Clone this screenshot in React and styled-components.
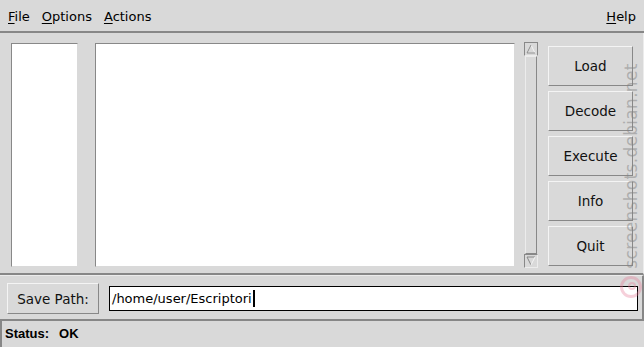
import React from 'react'
import styled, { createGlobalStyle } from 'styled-components'

const Global = createGlobalStyle`
  html, body { margin: 0; padding: 0; background: #d9d9d9; }
  body { width: 644px; height: 347px; overflow: hidden; }
`

const Window = styled.div`
  position: relative;
  width: 644px;
  height: 347px;
  background: #d9d9d9;
  display: flex;
  flex-direction: column;
  font-family: 'DejaVu Sans', sans-serif;
  font-size: 13px;
  color: #000;
  overflow: hidden;
`

const MenuBar = styled.div`
  height: 31px;
  display: flex;
  align-items: center;
  padding: 0 8px 0 8px;
  border-bottom: 2px solid #878787;
  gap: 12px;
`

const MenuItem = styled.span`
  margin-left: ${(p) => (p.$right ? 'auto' : '0')};
  line-height: 16px;
  padding-top: 3px;
  font-size: 13px;
  u { text-decoration: underline; text-underline-offset: 2px; }
`

const Main = styled.div`
  height: 242px;
  display: flex;
  padding: 10px 0 0 11px;
  box-sizing: border-box;
  border-right: 1px solid #ececec;
  border-bottom: 2px solid #878787;
`

const ListBox = styled.div`
  width: 67px;
  height: 224px;
  background: #fff;
  border-top: 1px solid #888;
  border-left: 1px solid #888;
  border-right: 1px solid #d9d9d9;
  border-bottom: 1px solid #d9d9d9;
  box-sizing: border-box;
`

const TextArea = styled(ListBox)`
  width: 420px;
  margin-left: 17px;
`

const ScrollBar = styled.div`
  width: 14px;
  height: 226px;
  margin: -1px 0 0 9px;
  display: flex;
  flex-direction: column;
  box-sizing: border-box;
`

const Arrow = styled.div`
  height: 14px;
  border: 1px solid;
  border-color: ${(p) => (p.$down ? '#888 #ececec #ececec #888' : '#888 #888 #ececec #888')};
  box-sizing: border-box;
  display: flex;
  align-items: center;
  justify-content: center;
  svg { display: block; }
`

const Trough = styled.div`
  flex: 1;
  margin: 0 1px;
  border: 1px solid;
  border-color: #ececec #888 #888 #ececec;
`

const ButtonColumn = styled.div`
  display: flex;
  flex-direction: column;
  gap: 5px;
  margin: 3px 0 0 10px;
`

const TkButton = styled.div`
  width: ${(p) => p.$w || 85}px;
  height: ${(p) => p.$h || 40}px;
  box-sizing: border-box;
  border: 1px solid;
  border-color: #f4f4f4 #888 #888 #f4f4f4;
  display: flex;
  align-items: center;
  justify-content: center;
  font-family: 'DejaVu Sans', sans-serif;
  font-size: 13.5px;
  color: #111;
`

const BottomFrame = styled.div`
  height: 46px;
  display: flex;
  align-items: center;
  padding: 2px 0 0 7px;
  border-top: 1px solid #ececec;
  border-right: 2px solid #878787;
  border-bottom: 2px solid #878787;
  box-sizing: border-box;
`

const PathEntry = styled.div`
  margin-left: 10px;
  width: 529px;
  height: 25px;
  box-sizing: border-box;
  background: #fff;
  border: 1px solid #000;
  display: flex;
  align-items: center;
  padding-left: 2px;
  font-size: 13px;
`

const Cursor = styled.span`
  display: inline-block;
  width: 2px;
  height: 17px;
  background: #000;
  margin-left: 1px;
`

const StatusBar = styled.div`
  flex: 1;
  display: flex;
  align-items: flex-start;
  padding: 5px 0 0 3px;
  border-left: 2px solid #878787;
  font-family: 'Liberation Sans', Arial, sans-serif;
  font-weight: bold;
  font-size: 13px;
  gap: 10px;
`

const Watermark = styled.div`
  position: absolute;
  left: 631px;
  top: 166px;
  transform: translate(-50%, -50%) rotate(-90deg);
  white-space: nowrap;
  font-family: 'DejaVu Sans', sans-serif;
  font-size: 17px;
  color: rgba(130, 130, 130, 0.5);
  letter-spacing: 0.3px;
`

const Logo = styled.svg`
  position: absolute;
  left: 619px;
  top: 275px;
`

const Under = ({ children }) => (
  <>
    <u>{children[0]}</u>
    {children.slice(1)}
  </>
)

const App = () => (
  <Window>
    <Global />
    <MenuBar>
      <MenuItem><Under>File</Under></MenuItem>
      <MenuItem><Under>Options</Under></MenuItem>
      <MenuItem><Under>Actions</Under></MenuItem>
      <MenuItem $right><Under>Help</Under></MenuItem>
    </MenuBar>
    <Main>
      <ListBox />
      <TextArea />
      <ScrollBar>
        <Arrow>
          <svg width="10" height="10" viewBox="0 0 10 10">
            <path d="M5 1 L9 9 L1 9 Z" fill="#d9d9d9" stroke="#f4f4f4" strokeWidth="1" />
            <path d="M5 1 L1 9 M1 9 L9 9" stroke="#888" strokeWidth="1" fill="none" />
          </svg>
        </Arrow>
        <Trough />
        <Arrow $down>
          <svg width="10" height="10" viewBox="0 0 10 10">
            <path d="M1 1 L9 1 L5 9 Z" fill="#d9d9d9" />
            <path d="M1 1 L9 1 M1 1 L5 9" stroke="#888" strokeWidth="1" fill="none" />
            <path d="M9 1 L5 9" stroke="#f4f4f4" strokeWidth="1" fill="none" />
          </svg>
        </Arrow>
      </ScrollBar>
      <ButtonColumn>
        <TkButton>Load</TkButton>
        <TkButton>Decode</TkButton>
        <TkButton>Execute</TkButton>
        <TkButton>Info</TkButton>
        <TkButton>Quit</TkButton>
      </ButtonColumn>
    </Main>
    <BottomFrame>
      <TkButton $w={92} $h={31}>Save Path:</TkButton>
      <PathEntry>
        /home/user/Escriptori
        <Cursor />
      </PathEntry>
    </BottomFrame>
    <StatusBar>
      <span>Status:</span>
      <span>OK</span>
    </StatusBar>
    <Watermark>screenshots.debian.net</Watermark>
    <Logo width="24" height="24" viewBox="0 0 24 24">
      <circle cx="12" cy="12" r="9.5" fill="none" stroke="rgba(230,120,150,0.35)" strokeWidth="3" />
      <circle cx="13" cy="11" r="3" fill="none" stroke="rgba(230,120,150,0.35)" strokeWidth="2" />
    </Logo>
  </Window>
)

export default App
